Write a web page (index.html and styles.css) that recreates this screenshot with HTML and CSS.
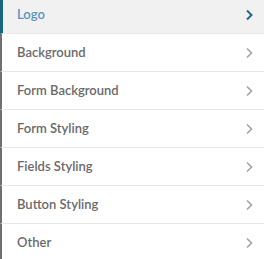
FILE: index.html
```html
<!DOCTYPE html>
<html>
<head>
<meta charset="utf-8">
<link rel="stylesheet" href="styles.css">
</head>
<body>
<ul class="menu">
  <li class="item active"><span class="label">Logo</span><svg class="chev" viewBox="0 0 8 12" width="8" height="12"><path d="M2 1.5 L6.5 6 L2 10.5" fill="none" stroke="currentColor" stroke-width="2"/></svg></li>
  <li class="item"><span class="label">Background</span><svg class="chev" viewBox="0 0 8 12" width="8" height="12"><path d="M2 1.5 L6.5 6 L2 10.5" fill="none" stroke="currentColor" stroke-width="1.6"/></svg></li>
  <li class="item"><span class="label">Form Background</span><svg class="chev" viewBox="0 0 8 12" width="8" height="12"><path d="M2 1.5 L6.5 6 L2 10.5" fill="none" stroke="currentColor" stroke-width="1.6"/></svg></li>
  <li class="item"><span class="label">Form Styling</span><svg class="chev" viewBox="0 0 8 12" width="8" height="12"><path d="M2 1.5 L6.5 6 L2 10.5" fill="none" stroke="currentColor" stroke-width="1.6"/></svg></li>
  <li class="item"><span class="label">Fields Styling</span><svg class="chev" viewBox="0 0 8 12" width="8" height="12"><path d="M2 1.5 L6.5 6 L2 10.5" fill="none" stroke="currentColor" stroke-width="1.6"/></svg></li>
  <li class="item"><span class="label">Button Styling</span><svg class="chev" viewBox="0 0 8 12" width="8" height="12"><path d="M2 1.5 L6.5 6 L2 10.5" fill="none" stroke="currentColor" stroke-width="1.6"/></svg></li>
  <li class="item"><span class="label">Other</span><svg class="chev" viewBox="0 0 8 12" width="8" height="12"><path d="M2 1.5 L6.5 6 L2 10.5" fill="none" stroke="currentColor" stroke-width="1.6"/></svg></li>
</ul>
</body>
</html>
```
FILE: styles.css
```css
html, body {
  margin: 0;
  padding: 0;
  background: #ffffff;
  overflow: hidden;
}
.menu {
  list-style: none;
  margin: -4px 0 0 0;
  padding: 0;
  font-family: Lato, "Open Sans", "Liberation Sans", sans-serif;
  font-size: 13px;
  font-weight: 600;
  color: #6a6a6a;
}
.item {
  display: flex;
  align-items: center;
  justify-content: space-between;
  box-sizing: border-box;
  height: 38px;
  padding: 0 11px 0 15px;
  border-left: 2px solid #6e7073;
  border-bottom: 1px solid #e8e8e8;
}
.item.active {
  background: #f1f1f2;
  border-left: 3px solid #17677a;
  padding-left: 14px;
  color: #5a94bb;
}
.label {
  line-height: 1;
}
.chev {
  color: #a3a3a3;
}
.item.active .chev {
  color: #2c6680;
}
```
